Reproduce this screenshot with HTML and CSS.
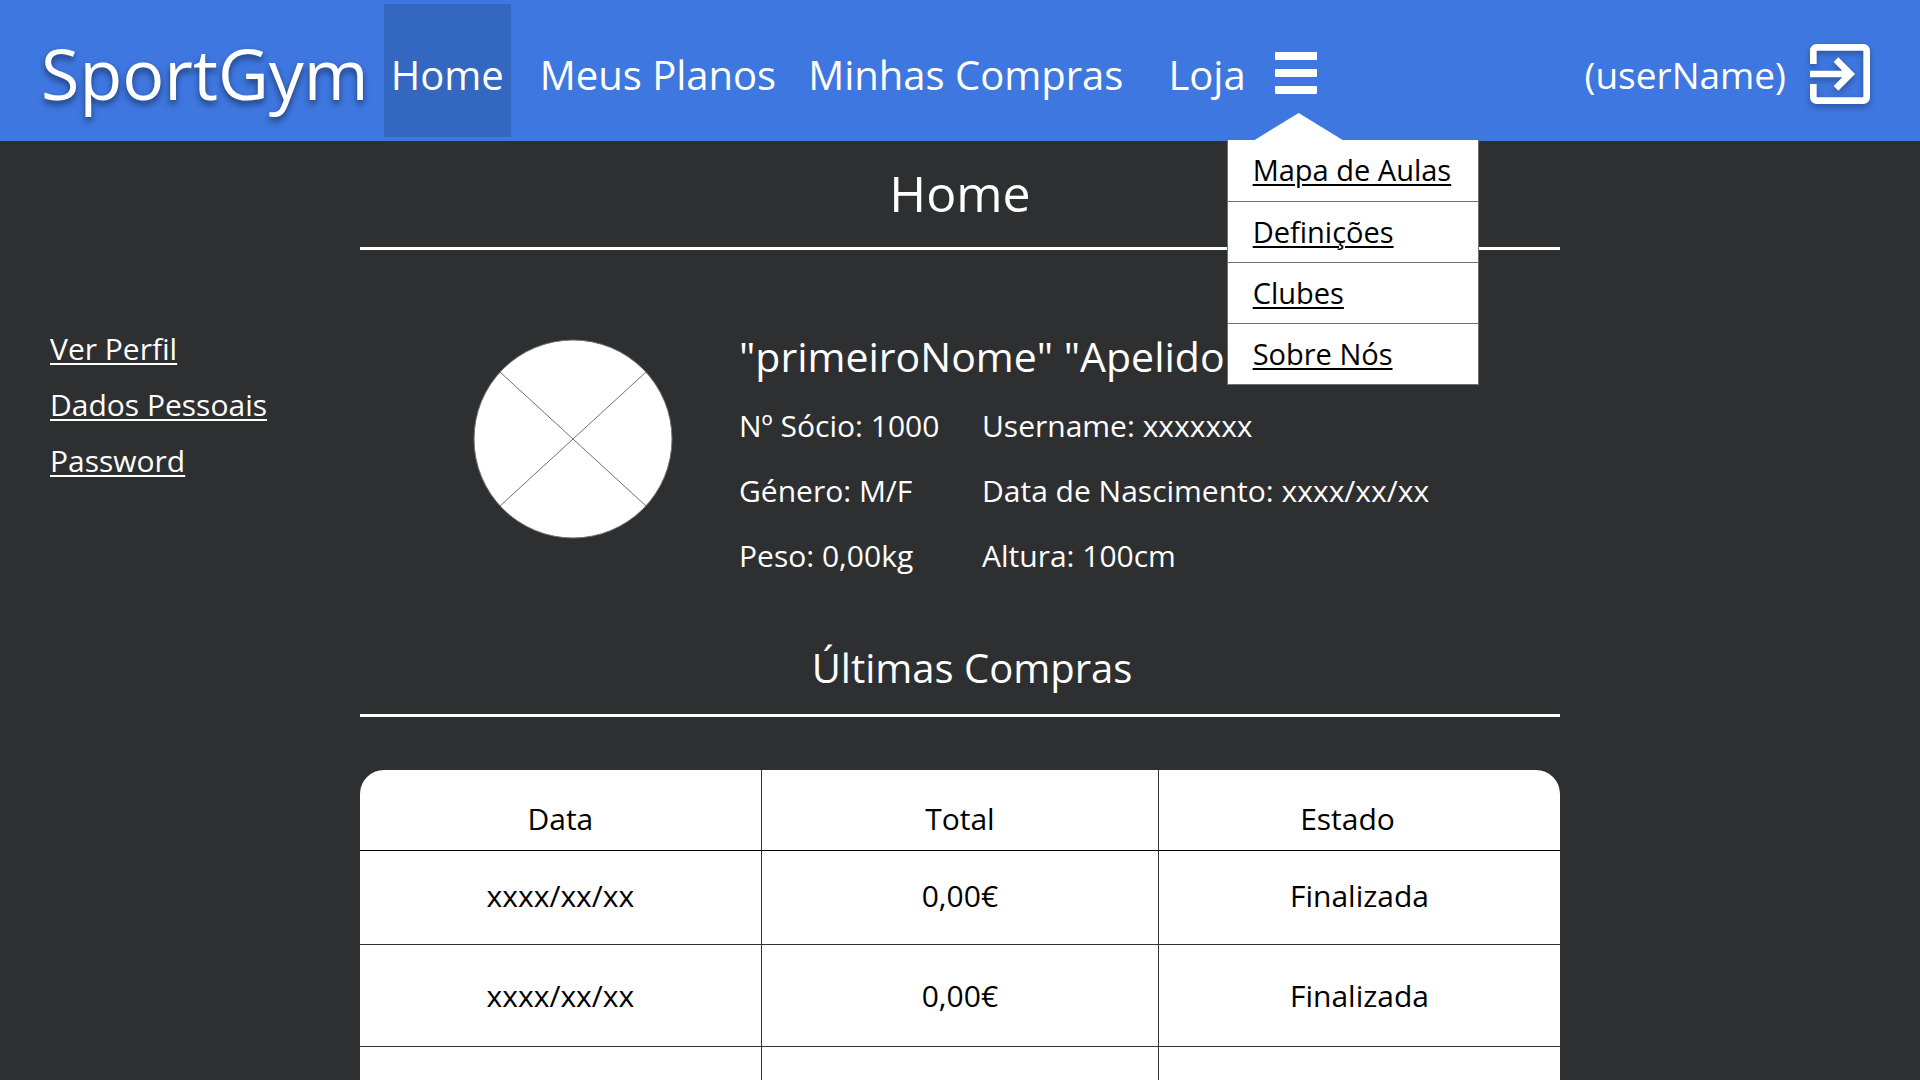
FILE: index.html
```html
<!DOCTYPE html>
<html lang="pt">
<head>
  <meta charset="utf-8">
  <meta name="viewport" content="width=device-width, initial-scale=1">
  <title>SportGym</title>
  <link rel="stylesheet" href="styles.css">
</head>
<body>
  <header class="topbar">
    <a class="logo" href="#">SportGym</a>
    <nav class="main-nav" aria-label="Principal">
      <a class="nav-link active" href="#">Home</a>
      <a class="nav-link" href="#">Meus Planos</a>
      <a class="nav-link" href="#">Minhas Compras</a>
      <a class="nav-link last" href="#">Loja</a>
      <div class="more">
        <button class="menu-button" type="button" aria-label="Mais" aria-expanded="true">
          <span class="bar"></span>
          <span class="bar"></span>
          <span class="bar"></span>
        </button>
        <ul class="dropdown">
          <li><a href="#">Mapa de Aulas</a></li>
          <li><a href="#">Definições</a></li>
          <li><a href="#">Clubes</a></li>
          <li><a href="#">Sobre Nós</a></li>
        </ul>
      </div>
    </nav>
    <div class="account">
      <span class="user-name">(userName)</span>
      <button class="logout" type="button" aria-label="Sair">
        <svg class="logout-icon" viewBox="3 3 18 18" aria-hidden="true">
          <path fill="currentColor" d="M10.09 15.59L11.5 17l5-5-5-5-1.41 1.41L12.67 11H3v2h9.67l-2.58 2.59zM19 3H5c-1.11 0-2 .9-2 2v4h2V5h14v14H5v-4H3v4c0 1.1.89 2 2 2h14c1.1 0 2-.9 2-2V5c0-1.1-.9-2-2-2z"/>
        </svg>
      </button>
    </div>
  </header>

  <div class="page">
    <nav class="side-nav" aria-label="Perfil">
      <a href="#">Ver Perfil</a>
      <a href="#">Dados Pessoais</a>
      <a href="#">Password</a>
    </nav>

    <main class="content">
      <h1 class="page-title">Home</h1>

      <section class="profile">
        <svg class="avatar" viewBox="0 0 200 200" role="img" aria-label="Fotografia">
          <circle cx="100" cy="100" r="99" fill="#fff" stroke="#707070"/>
          <path d="M27 33 L173 167 M173 33 L27 167" stroke="#707070" fill="none"/>
        </svg>
        <div class="profile-info">
          <h2 class="profile-name">"primeiroNome" "Apelido</h2>
          <div class="facts">
            <p>Nº Sócio: 1000</p>
            <p>Username: xxxxxxx</p>
            <p>Género: M/F</p>
            <p>Data de Nascimento: xxxx/xx/xx</p>
            <p>Peso: 0,00kg</p>
            <p>Altura: 100cm</p>
          </div>
        </div>
      </section>

      <h2 class="section-title">Últimas Compras</h2>

      <table class="purchases">
        <colgroup>
          <col class="col-date">
          <col class="col-total">
          <col class="col-state">
        </colgroup>
        <thead>
          <tr><th scope="col">Data</th><th scope="col">Total</th><th scope="col" class="state-head">Estado</th></tr>
        </thead>
        <tbody>
          <tr class="first-row"><td>xxxx/xx/xx</td><td>0,00€</td><td>Finalizada</td></tr>
          <tr><td>xxxx/xx/xx</td><td>0,00€</td><td>Finalizada</td></tr>
          <tr><td></td><td></td><td></td></tr>
        </tbody>
      </table>
    </main>
  </div>
</body>
</html>
```

FILE: styles.css
```css
* {
  box-sizing: border-box;
}

body {
  margin: 0;
  min-height: 100vh;
  background: #2e2f31;
  color: #fff;
  font-family: "Segoe UI", "Open Sans", "Noto Sans", sans-serif;
  font-size: 30px;
  line-height: 40px;
}

h1,
h2,
p,
ul {
  margin: 0;
  padding: 0;
  font-weight: 400;
}

button {
  padding: 0;
  border: 0;
  background: none;
  color: inherit;
  font: inherit;
  cursor: pointer;
}

/* Top bar */
.topbar {
  display: flex;
  align-items: stretch;
  height: 141px;
  padding: 4px 50px 4px 41px;
  background: #3e77e0;
}

.logo {
  padding-top: 9px;
  color: #fff;
  font-size: 70px;
  line-height: 120px;
  text-decoration: none;
  text-shadow: 0 4px 6px rgba(0, 0, 0, 0.5);
}

.main-nav {
  display: flex;
  margin-left: 15px;
}

.nav-link {
  margin-right: 18px;
  padding: 8px 7px 0;
  color: #fff;
  font-size: 40px;
  line-height: 125px;
  text-decoration: none;
  white-space: nowrap;
}

.nav-link.active {
  margin-right: 22px;
  background: #3467c0;
}

.nav-link.last {
  margin-right: 22px;
  margin-left: 13px;
}

.more {
  position: relative;
  display: flex;
  align-items: center;
}

.menu-button {
  display: flex;
  flex-direction: column;
  gap: 9px;
  width: 42px;
  padding-top: 4px;
}

.bar {
  height: 8px;
  border-radius: 1px;
  background: #fff;
}

.dropdown {
  position: absolute;
  z-index: 10;
  top: 135px;
  left: -48px;
  width: 252px;
  border: 1px solid #707070;
  background: #fff;
  list-style: none;
}

.dropdown::before {
  content: "";
  position: absolute;
  bottom: 100%;
  left: 27px;
  width: 88px;
  height: 27px;
  background: #fff;
  clip-path: polygon(50% 0, 100% 100%, 0 100%);
}

.dropdown li {
  height: 61px;
  padding: 10px 25px;
}

.dropdown li + li {
  border-top: 1px solid #707070;
}

.dropdown a {
  color: #000;
  font-size: 29px;
  text-decoration-thickness: 2px;
  text-underline-offset: 3px;
  white-space: nowrap;
}

.account {
  display: flex;
  align-items: center;
  gap: 24px;
  margin-left: auto;
  padding-top: 6px;
}

.user-name {
  padding-top: 2px;
  font-size: 37px;
}

.logout {
  display: flex;
}

.logout-icon {
  width: 60px;
  height: 60px;
  filter: drop-shadow(0 3px 3px rgba(0, 0, 0, 0.3));
}

/* Page columns */
.page {
  display: grid;
  grid-template-columns: 1fr minmax(0, 1200px) 1fr;
}

.side-nav {
  display: flex;
  flex-direction: column;
  align-items: flex-start;
  gap: 16px;
  padding: 188px 0 0 50px;
}

.side-nav a {
  color: #fff;
  text-decoration-thickness: 2px;
  text-underline-offset: 3px;
  white-space: nowrap;
}

.page-title,
.section-title {
  border-bottom: 3px solid #fff;
  text-align: center;
}

.page-title {
  padding: 18px 0 20px;
  font-size: 50px;
  line-height: 68px;
}

.section-title {
  padding: 0 0 19px 24px;
  font-size: 40px;
  line-height: 54px;
}

/* Profile */
.profile {
  display: flex;
  align-items: flex-start;
  gap: 66px;
  padding: 74px 0 65px 113px;
}

.avatar {
  flex: none;
  width: 200px;
  height: 200px;
  margin-top: 15px;
}

.profile-name {
  font-size: 41px;
  line-height: 64px;
  white-space: nowrap;
}

.facts {
  display: grid;
  grid-template-columns: 243px auto;
  row-gap: 25px;
  padding-top: 18px;
  white-space: nowrap;
}

/* Purchases */
.purchases {
  width: 100%;
  margin-top: 53px;
  border-spacing: 0;
  border-radius: 24px 24px 0 0;
  background: #fff;
  color: #000;
  table-layout: fixed;
}

.col-date {
  width: 33.4%;
}

.col-total {
  width: 33.1%;
}

.purchases th,
.purchases td {
  height: 102px;
  padding: 0;
  border-bottom: 1px solid #333;
  font-weight: 400;
  text-align: center;
}

.purchases th {
  height: 81px;
  padding-top: 18px;
  border-bottom-color: #000;
}

.purchases .first-row td {
  height: 94px;
  padding-bottom: 4px;
}

.purchases .state-head {
  padding-right: 24px;
}

.purchases th + th,
.purchases td + td {
  border-left: 1px solid #333;
}
```
